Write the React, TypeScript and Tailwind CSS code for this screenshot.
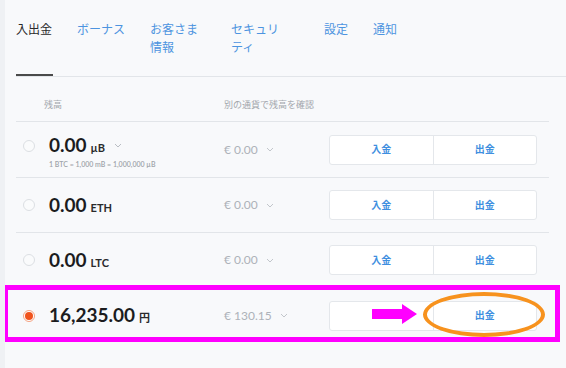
import React from 'react';

const tabs = [
  { lines: ['入出金'], className: 'w-[37px] mr-[24px]', active: true },
  { lines: ['ボーナス'], className: 'w-[49px] mr-[24px]', active: false },
  { lines: ['お客さま', '情報'], className: 'w-[49px] mr-[32px]', active: false },
  { lines: ['セキュリ', 'ティ'], className: 'w-[49px] mr-[44px]', active: false },
  { lines: ['設定'], className: 'w-[25px] mr-[24px]', active: false },
  { lines: ['通知'], className: 'w-[25px]', active: false },
];

const rows = [
  { amount: '0.00', unit: 'µB', chevron: true, sub: '1 BTC = 1,000 mB = 1,000,000 µB', eur: '€ 0.00' },
  { amount: '0.00', unit: 'ETH', eur: '€ 0.00' },
  { amount: '0.00', unit: 'LTC', eur: '€ 0.00' },
  { amount: '16,235.00', unit: '円', eur: '€ 130.15', selected: true },
];

function Chevron({ className }: { className?: string }) {
  return (
    <svg width="8" height="5" viewBox="0 0 8 5" className={className}>
      <path d="M1 1l3 3 3-3" fill="none" stroke="currentColor" strokeWidth="1" />
    </svg>
  );
}

export default function App() {
  return (
    <div className="relative w-[566px] h-[368px] overflow-hidden bg-[#f8f9fb] border-l-[5px] border-[#eff1f4] font-[Lato,'Noto_Sans_CJK_JP',sans-serif]">
      {/* tabs */}
      <div className="ml-[11px] pt-[21px] flex border-b border-[#e2e5e9]">
        {tabs.map((tab) => (
          <div
            key={tab.lines[0]}
            className={`${tab.className} h-[55px] text-[12px] leading-[18px] whitespace-nowrap ${
              tab.active ? 'text-[#2a2a2a] border-b-2 border-[#4a4a4a] -mb-px' : 'text-[#4d94e0]'
            }`}
          >
            {tab.lines.map((l) => (
              <div key={l}>{l}</div>
            ))}
          </div>
        ))}
      </div>

      {/* balances table */}
      <div className="ml-[11px] w-[533px]">
        <div className="flex h-[45px] pt-[22px] border-b border-[#e2e5e9] text-[9px] leading-[12px] text-[#a3a7ad]">
          <div className="w-[208px] pl-[28px]">残高</div>
          <div>別の通貨で残高を確認</div>
        </div>

        {rows.map((row, i) => (
          <div
            key={row.unit}
            className={`flex items-center ${i === 0 ? 'h-[56px]' : 'h-[55px]'} ${
              i < rows.length - 1 ? 'border-b border-[#e2e5e9]' : ''
            }`}
          >
            <div className={`w-[208px] flex flex-col ${row.sub ? 'pt-[4px]' : ''}`}>
              <div className="flex items-center">
                {row.selected ? (
                  <span className="ml-[7px] w-[12px] h-[12px] rounded-full border border-[#f4a282] bg-white flex items-center justify-center">
                    <span className="w-[8px] h-[8px] rounded-full bg-[#f0531d]" />
                  </span>
                ) : (
                  <span className="ml-[7px] w-[12px] h-[12px] rounded-full border border-[#dcdfe3] bg-[#fafbfc]" />
                )}
                <span className="ml-[14px] flex items-baseline">
                  <span className="text-[19px] leading-[22px] font-bold text-[#1c1c1e]">{row.amount}</span>
                  <span className="ml-[4px] text-[11px] font-bold text-[#2a2a2c]">{row.unit}</span>
                </span>
                {row.chevron && <Chevron className="ml-[9px] text-[#b9bdc3]" />}
              </div>
              {row.sub && (
                <div className="pl-[33px] mt-[2px] text-[7px] leading-[10px] font-semibold text-[#a0a4aa]">{row.sub}</div>
              )}
            </div>
            <div className="w-[105px] flex items-center text-[12px] text-[#adb2b9]">
              <span>{row.eur}</span>
              <Chevron className="ml-[8px] text-[#c2c6cb]" />
            </div>
            <div className="flex w-[208px] h-[30px] rounded-[3px] border border-[#e4e7eb] bg-white text-[10px] font-bold text-[#3f8fe0]">
              <div className="flex-1 flex items-center justify-center">{row.selected ? '' : '入金'}</div>
              <div className="w-px bg-[#e4e7eb]" />
              <div className="flex-1 flex items-center justify-center">出金</div>
            </div>
          </div>
        ))}
      </div>

      {/* annotations */}
      <div className="absolute left-[-2px] top-[285px] w-[557px] h-[57px] border-[5px] border-[#ff00ff]" />
      <svg className="absolute left-[367px] top-[304px]" width="46" height="21" viewBox="0 0 46 21">
        <polygon points="0,5 30,5 30,0 45,10 30,20 30,15 0,15" fill="#ff00ff" />
      </svg>
      <div className="absolute left-[418px] top-[292px] w-[122px] h-[45px] rounded-[50%] border-[4px] border-[#f7921e]" />
    </div>
  );
}
